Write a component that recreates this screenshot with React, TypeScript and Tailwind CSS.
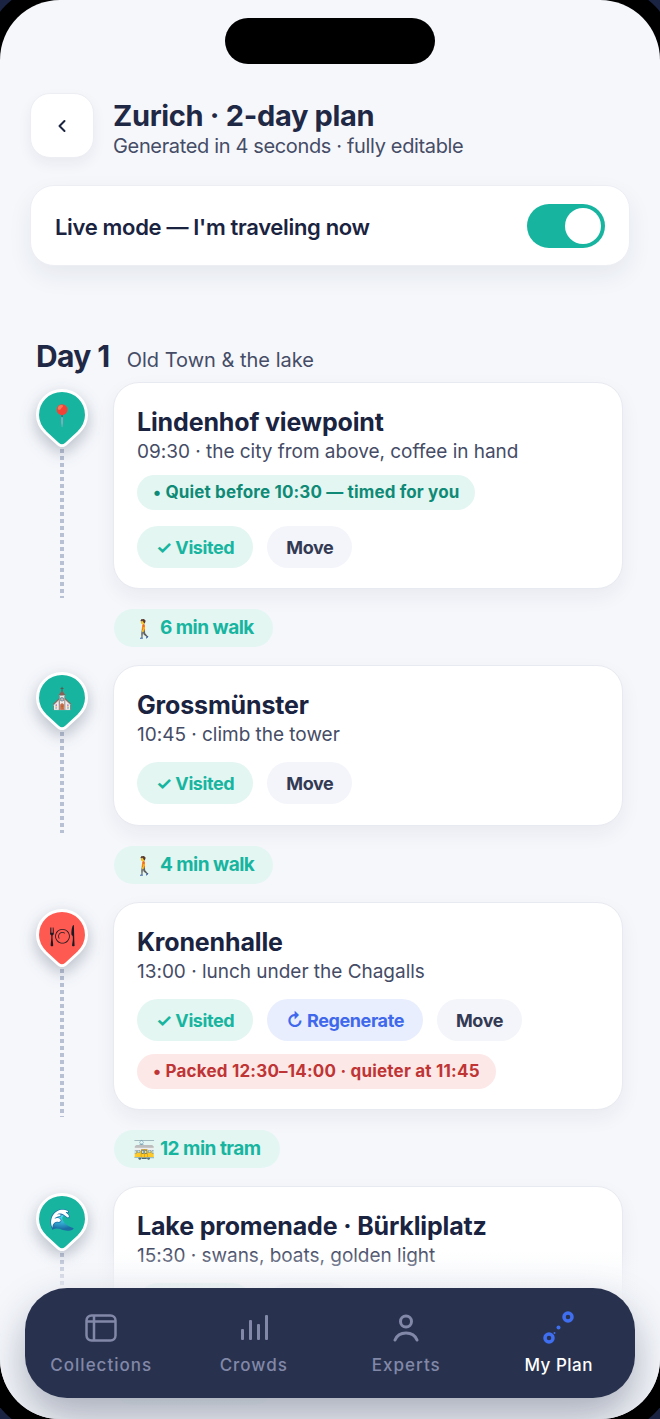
const font = "font-['Inter','Noto_Sans',sans-serif]";
const emojiFont = "font-['Noto_Color_Emoji',sans-serif]";

function Chip({ tone, children }: { tone: "teal" | "blue" | "gray"; children: React.ReactNode }) {
  const tones = {
    teal: "bg-[#e3f6f2] text-[#17b5a0]",
    blue: "bg-[#e8eefd] text-[#3f68ec]",
    gray: "bg-[#f4f5fa] text-[#333a54]",
  };
  return (
    <div className={`h-[42px] px-[19px] rounded-full flex items-center text-[18px] font-bold tracking-[-0.4px] whitespace-nowrap ${tones[tone]}`}>
      {children}
    </div>
  );
}

function Pin({ color, children }: { color: string; children: React.ReactNode }) {
  return (
    <div className="relative w-[52px] h-[58px] shrink-0 drop-shadow-[0_6px_8px_rgba(30,40,70,0.28)]">
      <svg width="52" height="58" viewBox="0 0 52 58" className="absolute inset-0">
        <path d="M26 1.500C12 1.500 1.500 12.500 1.500 26c0 7 3 12.500 8 17.500L22 55c2.400 2.200 5.600 2.200 8 0l12.500-11.500c5-5 8-10.500 8-17.500C50.500 12.500 40 1.500 26 1.500Z" fill={color} stroke="#fff" strokeWidth="3" />
      </svg>
      <div className="absolute left-0 right-0 top-[14px] flex justify-center text-[21px] leading-[26px]">{children}</div>
    </div>
  );
}

function Stop({ pin, color, title, sub, dots, children }: { pin: React.ReactNode; color: string; title: string; sub: string; dots: string; children: React.ReactNode }) {
  return (
    <div className="flex items-start pl-[36px] pr-[37px] gap-[25px]">
      <div className="w-[52px] shrink-0 flex flex-col items-center pt-[7px] -mb-[12px]">
        <Pin color={color}>{pin}</Pin>
        <div className={`mt-[2px] w-[4px] bg-[repeating-linear-gradient(to_bottom,#b8c0d3_0,#b8c0d3_4px,transparent_4px,transparent_7px)] ${dots}`} />
      </div>
      <div className="flex-1 min-w-0 bg-white rounded-[26px] border border-[#e8eaf1] shadow-[0_8px_20px_rgba(30,40,70,0.06)] pt-[24px] pb-[21px] px-[23px]">
        <div className="text-[25px] leading-[30px] font-bold tracking-[-0.15px] text-[#1a2340]">{title}</div>
        <div className="text-[19px] leading-[24px] tracking-[-0.02px] text-[#454c66] mt-[3px]">{sub}</div>
        {children}
      </div>
    </div>
  );
}

function Leg({ emoji, label }: { emoji: string; label: string }) {
  return (
    <div className="pl-[114px] pt-[20px] pb-[18px] flex">
      <div className="h-[38px] px-[19px] rounded-full bg-[#e3f6f2] text-[#17b5a0] flex items-center gap-[5px] text-[19px] font-bold tracking-[-0.5px] whitespace-nowrap">
        <span className={`${emojiFont} text-[18px]`}>{emoji}</span>
        {label}
      </div>
    </div>
  );
}

function NavItem({ label, active, children }: { label: string; active?: boolean; children: React.ReactNode }) {
  return (
    <div className="flex-1 flex flex-col items-center">
      <div className="h-[34px] flex items-center">{children}</div>
      <div className={`mt-[9px] text-[17px] leading-[22px] font-medium ${active ? "text-white tracking-[0.5px]" : "text-[#8288a8] tracking-[1px]"}`}>{label}</div>
    </div>
  );
}

export default function App() {
  return (
    <div className={`relative w-[660px] h-[1419px] overflow-hidden bg-[#1a2342] ${font}`}>
      {/* phone frame, only its corners show */}
      <div className="absolute -inset-[17px] rounded-[77px] bg-black" />
      <div className="relative h-[1419px] overflow-hidden bg-[#f5f7fb] rounded-[60px]">
        {/* status island */}
        <div className="h-[93px] pt-[18px] flex justify-center">
          <div className="w-[210px] h-[46px] rounded-full bg-black" />
        </div>

        {/* header */}
        <div className="flex items-center px-[30px] gap-[19px]">
          <div className="w-[64px] h-[65px] rounded-[20px] bg-white border border-[#eceef4] shadow-[0_6px_14px_rgba(30,40,70,0.06)] flex items-center justify-center">
            <svg width="12" height="14" viewBox="0 0 12 14" fill="none">
              <path d="M8.500 2 3.500 7l5 5" stroke="#1a2340" strokeWidth="2" strokeLinecap="round" strokeLinejoin="round" />
            </svg>
          </div>
          <div className="pt-[6px]">
            <div className="text-[29px] leading-[34px] font-bold tracking-[-0.33px] text-[#1f2945]">Zurich · 2-day plan</div>
            <div className="text-[20px] leading-[24px] tracking-[-0.35px] text-[#454c66] mt-[1px]">Generated in 4 seconds · fully editable</div>
          </div>
        </div>

        {/* live mode */}
        <div className="mx-[30px] mt-[27px] h-[81px] rounded-[24px] bg-white border border-[#eceef4] shadow-[0_10px_24px_rgba(30,40,70,0.07)] flex items-center justify-between pl-[24px] pr-[24px]">
          <div className="pt-[3px] text-[22px] font-semibold tracking-[-0.33px] text-[#1a2340]">Live mode — I'm traveling now</div>
          <div className="mt-[1px] w-[78px] h-[44px] rounded-full bg-[#17b5a0] flex items-center justify-end pr-[4px]">
            <div className="w-[36px] h-[36px] rounded-full bg-white" />
          </div>
        </div>

        {/* day heading */}
        <div className="mt-[70px] pl-[36px] flex items-baseline gap-[17px]">
          <div className="text-[30px] leading-[40px] font-bold tracking-[-0.6px] text-[#1f2945]">Day 1</div>
          <div className="text-[20px] tracking-[0px] text-[#454c66]">Old Town &amp; the lake</div>
        </div>

        {/* timeline */}
        <div className="mt-[6px]">
          <Stop pin={<span className={emojiFont}>📍</span>} color="#17b5a0" title="Lindenhof viewpoint" sub="09:30 · the city from above, coffee in hand" dots="h-[149px]">
            <div className="mt-[11px] flex">
              <div className="h-[35px] px-[16px] rounded-full bg-[#e3f6f2] text-[#0f8a76] flex items-center text-[17px] font-bold tracking-[0.15px] whitespace-nowrap">• Quiet before 10:30 — timed for you</div>
            </div>
            <div className="mt-[16px] -mb-[1px] flex gap-[14px]">
              <Chip tone="teal">✓ Visited</Chip>
              <Chip tone="gray">Move</Chip>
            </div>
          </Stop>
          <Leg emoji="🚶" label="6 min walk" />
          <Stop pin={<span className={emojiFont}>⛪</span>} color="#17b5a0" title="Grossmünster" sub="10:45 · climb the tower" dots="h-[101px]">
            <div className="mt-[15px] flex gap-[14px]">
              <Chip tone="teal">✓ Visited</Chip>
              <Chip tone="gray">Move</Chip>
            </div>
          </Stop>
          <Leg emoji="🚶" label="4 min walk" />
          <Stop pin={<span className="font-['DejaVu_Sans',sans-serif] text-[#1a1a22]">🍽︎</span>} color="#ff5a52" title="Kronenhalle" sub="13:00 · lunch under the Chagalls" dots="h-[148px]">
            <div className="mt-[15px] flex gap-[14px]">
              <Chip tone="teal">✓ Visited</Chip>
              <Chip tone="blue">↻ Regenerate</Chip>
              <Chip tone="gray">Move</Chip>
            </div>
            <div className="mt-[13px] -mb-[1px] flex">
              <div className="h-[35px] px-[16px] rounded-full bg-[#fde8e8] text-[#bf3434] flex items-center text-[17px] font-bold tracking-[0.2px] whitespace-nowrap">• Packed 12:30–14:00 · quieter at 11:45</div>
            </div>
          </Stop>
          <Leg emoji="🚋" label="12 min tram" />
          <Stop pin={<span className={emojiFont}>🌊</span>} color="#17b5a0" title="Lake promenade · Bürkliplatz" sub="15:30 · swans, boats, golden light" dots="h-[100px]">
            <div className="mt-[15px] flex gap-[14px]">
              <Chip tone="teal">✓ Visited</Chip>
              <Chip tone="gray">Move</Chip>
            </div>
          </Stop>
          <Leg emoji="🚶" label="8 min walk" />
        </div>

        {/* fade under the nav */}
        <div className="absolute left-0 right-0 top-[1250px] bottom-0 bg-gradient-to-b from-[#f5f7fb]/0 via-[#f5f7fb]/85 via-25% to-[#f5f7fb]/85" />

        {/* bottom nav */}
        <div className="absolute left-[25px] right-[25px] top-[1288px] h-[110px] rounded-[42px] bg-[#28324e] shadow-[0_20px_40px_rgba(30,40,70,0.35)] flex items-center">
          <NavItem label="Collections">
            <svg width="32" height="28" viewBox="0 0 32 28" fill="none" stroke="#8288a8" strokeWidth="2.500">
              <rect x="1.500" y="1.500" width="29" height="25" rx="5" />
              <path d="M1.500 7.500h29M9 1.500v25" />
            </svg>
          </NavItem>
          <NavItem label="Crowds">
            <svg width="28" height="26" viewBox="0 0 28 26" fill="#8288a8">
              <rect x="1" y="14" width="3" height="11" rx="1" />
              <rect x="9" y="5" width="3" height="20" rx="1" />
              <rect x="17" y="9" width="3" height="16" rx="1" />
              <rect x="25" y="0" width="3" height="25" rx="1" />
            </svg>
          </NavItem>
          <NavItem label="Experts">
            <svg width="26" height="28" viewBox="0 0 26 28" fill="none" stroke="#8288a8" strokeWidth="3" strokeLinecap="round">
              <circle cx="13" cy="7.500" r="5.500" />
              <path d="M2 26c2-5 6-7 11-7s9 2 11 7" />
            </svg>
          </NavItem>
          <NavItem label="My Plan" active>
            <svg width="32" height="34" viewBox="0 0 32 34" fill="none" stroke="#3f6ef0" strokeWidth="3.500">
              <circle cx="25" cy="6" r="4" />
              <circle cx="6" cy="27" r="4" />
              <circle cx="15.500" cy="16.500" r="2" fill="#3f6ef0" stroke="none" />
              <circle cx="11.500" cy="22" r="1" fill="#3f6ef0" stroke="none" />
            </svg>
          </NavItem>
        </div>
      </div>
    </div>
  );
}
